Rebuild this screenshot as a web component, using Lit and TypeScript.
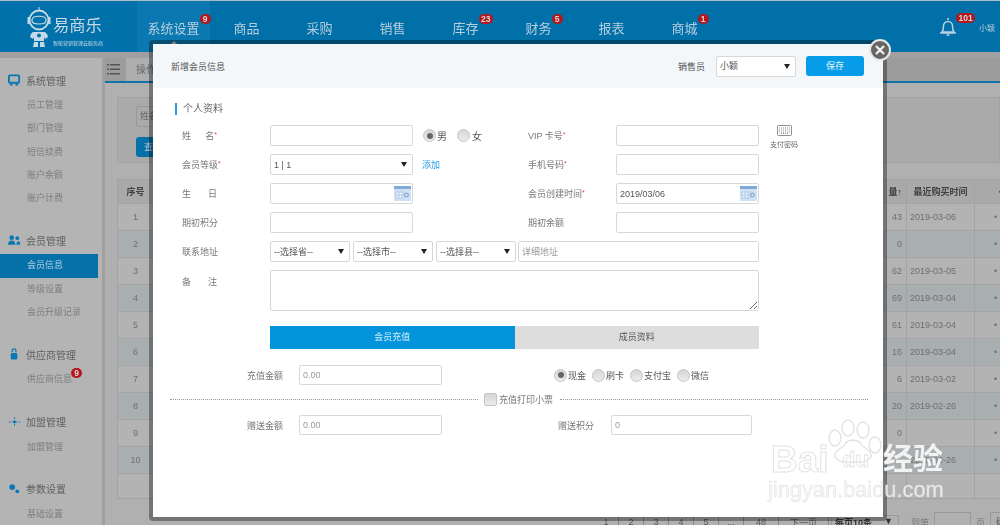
import { LitElement, html, css, svg } from "lit";
import { customElement } from "lit/decorators.js";

const calendar = svg`<svg width="17" height="15" viewBox="0 0 17 15"><rect width="17" height="15" fill="#cfe2f5"/><rect width="17" height="3" fill="#7fa9d6"/><path d="M2 6h8v6H2zM2 9h8M5 6v6M8 6v6" fill="#eef5fc" stroke="#9dbde0" stroke-width=".7"/><circle cx="12.5" cy="9" r="1.9" fill="none" stroke="#6f9ccc"/></svg>`;
const radio = (on: boolean) => html`<span class="radio ${on ? "on" : ""}"></span>`;
const sel = (t: string) => html`<div class="sl"><select><option>${t}</option></select></div>`;

@customElement("app-root")
export class AppRoot extends LitElement {
  static styles = css`
    :host { display: block; width: 1000px; height: 525px; overflow: hidden; position: relative; font-family: "Liberation Sans", "Noto Sans CJK SC", sans-serif; font-size: 9px; color: #666; background: #a0a0a0; }
    * { box-sizing: border-box; }
    .soft { filter: blur(.35px); width: 1000px; height: 525px; position: relative; overflow: hidden; }
    header { height: 52px; background: #016fa8; border-top: 1px solid #a9bdc9; display: flex; align-items: stretch; color: #b6cfdd; }
    .logo { width: 137px; background: #0171ab; display: flex; padding: 5px 0 0 26px; color: #c6d9e5; }
    .logo-text { margin-left: 1px; padding-top: 8px; }
    .logo-text b { display: block; font-size: 16.3px; font-weight: 400; line-height: 22px; white-space: nowrap; }
    .logo-text small { display: block; font-size: 5px; line-height: 8px; margin-top: 3px; white-space: nowrap; }
    nav { display: flex; }
    .nav { width: 73px; text-align: center; font-size: 13px; line-height: 54px; position: relative; }
    .nav.cur { background: #0b78b1; }
    .nav.cur::after { content: ""; position: absolute; left: 33px; top: 40px; border: 4px solid transparent; border-top: 0; border-bottom-color: #c4c4c4; }
    .nav-t { display: inline-block; position: relative; line-height: 16px; vertical-align: middle; }
    .badge { position: absolute; background: #b5161c; color: #d8d8d8; border-radius: 6px; font: bold 8.5px/10px "Liberation Sans", sans-serif; padding: 0 2.5px; min-width: 11px; height: 10px; text-align: center; }
    .nav .badge { top: -7px; left: 100%; }
    .user { margin-left: auto; display: flex; position: relative; width: 62px; padding: 16px 0 0 0; }
    .user span.name { position: absolute; right: 5px; top: 21px; font-size: 8px; }
    .user .badge { left: 18px; top: 12px; }
    .main { display: flex; margin-top: 6px; height: 467px; }
    aside { width: 102px; background: #b4b4b4; padding-top: 10px; flex: none; }
    .group { margin-bottom: 18px; }
    .group h4 { margin: 0 0 2px; height: 24px; display: flex; align-items: center; font-weight: 400; font-size: 10px; color: #5f5f5f; padding-left: 8px; gap: 5px; }
    .group h4 svg { width: 13px; height: 12px; flex: none; }
    .item { height: 23.3px; line-height: 23px; padding-left: 27px; color: #7d7d7d; position: relative; width: 98px; }
    .item.active { background: #0670a9; color: #b3cfde; }
    .item .badge { left: 71px; top: 0; }
    .content { margin-left: 3px; flex: 1; background: #b0b0b0; min-width: 0; }
    .tabs { height: 25px; background: #9c9c9c; border-bottom: 2px solid #1173a8; display: flex; padding-left: 2px; }
    .burger { width: 13px; margin: 6px 6px 0 0; }
    .tab { width: 60px; background: #aeaeae; line-height: 24px; font-size: 10px; padding-left: 10px; color: #666; }
    .panel { margin: 14px 0 0 12px; height: 66px; background: #aaa; border: 1px solid #a2a2a2; padding: 8px 18px; }
    .panel .f { width: 120px; height: 21px; border: 1px solid #999; border-radius: 2px; line-height: 19px; padding-left: 3px; }
    .panel .b { margin-top: 10px; width: 40px; height: 20px; border-radius: 3px; background: #0670a9; color: #bcd; line-height: 20px; padding-left: 8px; }
    .table { margin: 16px 0 0 12px; border: 1px solid #a3a3a3; width: 884px; }
    .tr { display: flex; height: 27px; background: #b3b3b3; border-bottom: 1px solid #a4a4a4; align-items: center; color: #6f6f6f; }
    .tr:nth-child(odd) { background: #a9aeb0; }
    .tr.head { height: 24px; background: #a9a9a9; font-weight: 700; color: #404040; }
    .tr.foot { height: 24px; background: #b3b3b3; border-bottom: 0; }
    .c { height: 100%; display: flex; align-items: center; border-right: 1px solid #a3a3a3; flex: none; }
    .seq { width: 36px; justify-content: center; }
    .mid { flex: 1; }
    .num { width: 20px; justify-content: flex-end; padding-right: 4px; }
    .date { width: 68px; padding-left: 3px; }
    .act { width: 25px; padding-left: 19px; border: 0; }
    .tr.head .date { justify-content: center; padding: 0; }
    .pager { display: flex; height: 20px; margin-top: 13px; padding-left: 489px; align-items: center; color: #555; }
    .pager span { width: 25px; text-align: center; flex: none; border-right: 1px solid #888; }
    .pager .w35 { width: 35px; } .pager .w50 { width: 50px; }
    .pager .sel { width: 68px; margin-left: 2px; border: 1px solid #999; font-weight: 700; display: flex; justify-content: space-between; padding: 0 5px 0 3px; color: #333; }
    .pager .t { border: 0; color: #777; width: auto; margin-left: 12px; }
    .pager .t.n { margin-left: 5px; }
    .pager .in { width: 37px; height: 20px; border: 1px solid #999; margin-left: 5px; }
    .pager .box { width: 30px; height: 20px; margin-left: 5px; border: 1px solid #999; line-height: 18px; }
    .modal { position: absolute; left: 149px; top: 40px; width: 738px; height: 481px; border: 4px solid rgba(0,0,0,.34); border-radius: 4px; background: #fff padding-box; color: #777; }
    .mhead { height: 44px; background: #f4f7fa; display: flex; align-items: center; padding: 0 19px 0 18px; color: #555; }
    .mhead .sp { flex: 1; }
    .mhead .sl { width: 80px; margin: 0 10px 0 11px; }
    .save { width: 58px; height: 20px; border-radius: 3px; background: #069ce8; color: #e6f5fd; text-align: center; line-height: 20px; }
    .close { position: absolute; right: -8px; top: -5px; width: 22px; height: 22px; border-radius: 50%; background: #666; border: 2px solid #e8e8e8; display: flex; align-items: center; justify-content: center; }
    .body { padding: 15px 0 0 29px; position: relative; }
    .sec { height: 12px; margin-left: -7px; border-left: 2px solid #2aa0e0; padding-left: 6px; line-height: 12px; font-size: 10px; color: #666; }
    .grid { margin-top: 10px; display: grid; grid-template-columns: 88px 143px 115px 88px 143px auto; grid-auto-rows: 21px; row-gap: 8px; width: 620px; align-items: center; }
    .lab { white-space: nowrap; }
    .lab.sp2 { display: flex; width: 35px; justify-content: space-between; }
    .lab i { color: #e5484d; font-style: normal; font-size: 7px; vertical-align: 2px; }
    input, select, textarea { font: 9px "Liberation Sans", "Noto Sans CJK SC", sans-serif; color: #555; border: 1px solid #d8d8d8; border-radius: 2px; background: #fff; height: 21px; padding: 0 3px; width: 100%; outline: none; margin: 0; display: block; }
    select { appearance: none; -webkit-appearance: none; }
    input::placeholder { color: #999; }
    .sl { position: relative; }
    .sl::after { content: ""; position: absolute; right: 6px; top: 8px; border: 3px solid transparent; border-bottom: 0; border-top: 5px solid #222; pointer-events: none; }
    .gray { color: #999; }
    .wrap { position: relative; }
    .wrap svg { position: absolute; right: 2px; top: 3px; }
    .rg { display: flex; align-items: center; margin-left: 10px; color: #555; }
    .rg .m { margin: 0 10px 0 1px; font-size: 10px; }
    .rg .f { margin-left: 2px; font-size: 10px; }
    .radio { width: 13px; height: 13px; border-radius: 50%; border: 1px solid #c4c4c4; background: linear-gradient(#d6d6d6, #ececec); flex: none; display: flex; align-items: center; justify-content: center; }
    .radio.on::after { content: ""; width: 6px; height: 6px; border-radius: 50%; background: #666; }
    .add { margin-left: 9px; color: #2a9fe0; }
    .kb { display: flex; flex-direction: column; align-items: center; width: 30px; margin-left: 10px; font-size: 7px; white-space: nowrap; color: #666; height: 21px; margin-top: -1px; line-height: 9px; }
    .kb svg { margin-bottom: 4px; flex: none; }
    .addr { grid-column: 2 / span 4; display: flex; }
    .addr .sl { width: 80px; margin-right: 3px; flex: none; }
    .addr input { flex: 1; margin-left: -1px; }
    .ta { grid-column: 2 / span 4; height: 41px; align-self: start; }
    .ta textarea { height: 41px; }
    .rem { align-self: start; padding-top: 5px; }
    .mtabs { display: flex; margin: 35px 0 0 88px; width: 489px; height: 23px; line-height: 23px; text-align: center; }
    .mtabs div { flex: 1; background: #ddd; color: #555; }
    .mtabs div.on { background: #0494dc; color: #d8effb; }
    .row { display: flex; align-items: center; height: 20px; }
    .row.first { margin-top: 16px; }
    .row .l { width: 101px; text-align: right; margin-right: 16px; flex: none; }
    .row input { width: 143px; height: 20px; flex: none; }
    .pay { margin-left: 112px; display: flex; align-items: center; color: #555; }
    .pay span.x { margin: 0 6px 0 1px; }
    .div { display: flex; align-items: center; margin: 4px 0 6px -12px; height: 20px; width: 698px; }
    .dots { height: 0; border-top: 1px dotted #999; flex: 1; }
    .check { width: 13px; height: 13px; border-radius: 2px; border: 1px solid #c4c4c4; background: linear-gradient(#d6d6d6, #ececec); margin: 0 2px 0 6px; flex: none; }
    .div .txt { margin-right: 7px; }
    .row2 { margin-left: 116px; width: 53px; flex: none; }
    .row .in2 { width: 141px; }
    .mark { position: absolute; left: 760px; top: 410px; width: 200px; height: 100px; pointer-events: none; }
    .paw { position: absolute; left: 60px; top: 5px; }
    .bai { position: absolute; left: 11px; top: 29px; font: 700 37px/42px "Liberation Sans", sans-serif; color: transparent; -webkit-text-stroke: 1px #e2e2e2; }
    .du { position: absolute; left: 82px; top: 37px; font: 700 22px/26px "Liberation Sans", sans-serif; color: transparent; -webkit-text-stroke: .8px #e2e2e2; }
    .jy { position: absolute; left: 123px; top: 31px; font-size: 30px; line-height: 36px; font-weight: 700; color: #f2f2f2; white-space: nowrap; }
    .url { position: absolute; left: 8px; top: 67px; font: 400 21.8px/26px "Liberation Sans", sans-serif; color: rgba(242,242,242,.85); -webkit-text-stroke: .4px #dedede; white-space: nowrap; }
  `;

  render() {
    const navs = [["系统设置", "9"], ["商品", ""], ["采购", ""], ["销售", ""], ["库存", "23"], ["财务", "5"], ["报表", ""], ["商城", "1"]];
    const groups = [
      { t: "系统管理", ic: svg`<rect x="1" y="1" width="11" height="8" rx="1" fill="none" stroke="#0a78b4" stroke-width="2"/><path d="M2 11h3M8 11h3" stroke="#0a78b4" stroke-width="2"/>`, items: ["员工管理", "部门管理", "短信续费", "账户余额", "账户计费"] },
      { t: "会员管理", ic: svg`<circle cx="4" cy="3.5" r="2.5" fill="#0a78b4"/><circle cx="10" cy="4" r="2" fill="#0a78b4"/><path d="M0 11c0-6 8-6 8 0zM9 11c0-4 4-5 4-1v1z" fill="#0a78b4"/>`, items: ["会员信息", "等级设置", "会员升级记录"] },
      { t: "供应商管理", ic: svg`<path d="M4.500 4V2.500a2 2 0 014 0V4" fill="none" stroke="#0a78b4" stroke-width="1.400"/><rect x="3" y="5" width="7" height="7" rx="1.500" fill="#0a78b4"/>`, items: ["供应商信息"] },
      { t: "加盟管理", ic: svg`<circle cx="7" cy="6" r="1.600" fill="#0a78b4"/><path d="M1 6h12M7 1v10" stroke="#0a78b4" stroke-dasharray="2 1.500"/>`, items: ["加盟管理"] },
      { t: "参数设置", ic: svg`<circle cx="4.500" cy="4" r="3" fill="#0a78b4"/><circle cx="10" cy="8.500" r="2" fill="#0a78b4"/>`, items: ["基础设置"] },
    ];
    const rows = [["43", "2019-03-06"], ["0", ""], ["62", "2019-03-05"], ["69", "2019-03-04"], ["61", "2019-03-04"], ["16", "2019-03-04"], ["6", "2019-03-02"], ["20", "2019-02-26"], ["0", ""], ["", "2019-02-26"]];
    return html`<div class="soft">
      <header>
        <div class="logo">
          <svg width="26" height="42" viewBox="0 0 26 42" fill="none" stroke="#c6d9e6">
            <path d="M13 1v3" stroke-width="1"/>
            <circle cx="13" cy="14" r="9.500" stroke-width="1.800"/>
            <path d="M6 14c0-5 14-5 14 0v1c0 4-14 4-14 0z" stroke-width="1.200"/>
            <path d="M2.500 11v7M23.500 11v7" stroke-width="2"/>
            <path d="M8 26h10c2 0 3.500 2 4 5l-3 2-1-2v4H8v-4l-1 2-3-2c.5-3 2-5 4-5zM8 36h4v5H7zM14 36h4l1 5h-5z" fill="#c6d9e6" stroke="none"/>
            <circle cx="13" cy="29.500" r="2" fill="#0171ab" stroke="none"/>
          </svg>
          <div class="logo-text"><b>易商乐</b><small>智能营销管理云服务商</small></div>
        </div>
        <nav>${navs.map(([n, b], i) => html`<div class="nav ${i === 0 ? "cur" : ""}"><span class="nav-t">${n}${b ? html`<span class="badge">${b}</span>` : ""}</span></div>`)}</nav>
        <div class="user">
          <svg width="20" height="20" viewBox="0 0 20 20" fill="none" stroke="#b9d2e0" stroke-width="1.500"><path d="M4 15c1.500-2 1.500-3 1.500-6a4.500 4.500 0 019 0c0 3 0 4 1.500 6zM2 16h16M10 1v2M8.500 18h3"/></svg>
          <span class="badge">101</span>
          <span class="name">小颖</span>
        </div>
      </header>
      <div class="main">
        <aside>
          ${groups.map((g) => html`<div class="group"><h4><svg viewBox="0 0 14 12">${g.ic}</svg>${g.t}</h4>
            ${g.items.map((it) => html`<div class="item ${it === "会员信息" ? "active" : ""}">${it}${it === "供应商信息" ? html`<span class="badge">9</span>` : ""}</div>`)}
          </div>`)}
        </aside>
        <div class="content">
          <div class="tabs">
            <svg class="burger" width="13" height="11" viewBox="0 0 13 11" fill="#555"><path d="M0 0h2v1.500H0zM3 0h10v1.500H3zM0 4.500h2V6H0zM3 4.500h10V6H3zM0 9h2v1.500H0zM3 9h10v1.500H3z"/></svg>
            <div class="tab">操作</div>
          </div>
          <div class="panel"><div class="f">姓名</div><div class="b">查询</div></div>
          <div class="table">
            <div class="tr head"><div class="c seq">序号</div><div class="c mid"></div><div class="c num">量↑</div><div class="c date">最近购买时间</div><div class="c act">〈</div></div>
            ${rows.map((r, i) => html`<div class="tr"><div class="c seq">${i + 1}</div><div class="c mid"></div><div class="c num">${r[0]}</div><div class="c date">${r[1]}</div><div class="c act">•</div></div>`)}
            <div class="tr foot"><div class="c seq"></div><div class="c mid"></div><div class="c num"></div><div class="c date"></div><div class="c act"></div></div>
          </div>
          <div class="pager">
            ${["1", "2", "3", "4", "5", "..."].map((p) => html`<span>${p}</span>`)}<span class="w35">48</span><span class="w50">下一页</span><span class="sel">每页10条<b>▼</b></span>
            <span class="t">到第</span><span class="in"></span><span class="t n">页</span><span class="box">确定</span>
          </div>
        </div>
      </div>

      <div class="modal">
        <div class="close"><svg width="10" height="10" viewBox="0 0 10 10" stroke="#f2f2f2" stroke-width="2.200"><path d="M1 1l8 8M9 1l-8 8"/></svg></div>
        <div class="mhead"><span>新增会员信息</span><span class="sp"></span><span>销售员</span>${sel("小颖")}<div class="save">保存</div></div>
        <div class="body">
          <div class="sec">个人资料</div>
          <div class="grid">
            <div class="lab sp2"><span>姓</span><span>名<i>*</i></span></div><input />
            <div class="rg">${radio(true)}<span class="m">男</span>${radio(false)}<span class="f">女</span></div>
            <div class="lab">VIP 卡号<i>*</i></div><input />
            <div class="kb"><svg width="15" height="11" viewBox="0 0 15 11" fill="none" stroke="#777" stroke-width=".8"><rect x=".5" y=".5" width="14" height="10" rx="1"/><path d="M2 3h11M2 5h11M2 7h11M4 8.500h7" stroke-dasharray="1 1"/></svg>支付密码</div>

            <div class="lab">会员等级<i>*</i></div>${sel("1 | 1")}
            <div class="add">添加</div>
            <div class="lab">手机号码<i>*</i></div><input /><div></div>

            <div class="lab sp2"><span>生</span><span>日</span></div><div class="wrap"><input />${calendar}</div><div></div>
            <div class="lab">会员创建时间<i>*</i></div><div class="wrap"><input value="2019/03/06" />${calendar}</div><div></div>

            <div class="lab">期初积分</div><input /><div></div>
            <div class="lab">期初余额</div><input /><div></div>

            <div class="lab">联系地址</div>
            <div class="addr">${sel("--选择省--")}${sel("--选择市--")}${sel("--选择县--")}<input placeholder="详细地址" /></div>
            <div></div>

            <div class="lab sp2 rem"><span>备</span><span>注</span></div>
            <div class="ta"><textarea></textarea></div>
            <div></div>
          </div>
          <div class="mtabs"><div class="on">会员充值</div><div>成员资料</div></div>
          <div class="row first">
            <div class="l">充值金额</div><input class="gray" value="0.00" />
            <div class="pay">${radio(true)}<span class="x">现金</span>${radio(false)}<span class="x">刷卡</span>${radio(false)}<span class="x">支付宝</span>${radio(false)}<span class="x">微信</span></div>
          </div>
          <div class="div"><div class="dots"></div><div class="check"></div><div class="txt">充值打印小票</div><div class="dots"></div></div>
          <div class="row">
            <div class="l">赠送金额</div><input class="gray" value="0.00" />
            <div class="row2">赠送积分</div><input class="gray in2" value="0" />
          </div>
        </div>
      </div>

      <div class="mark">
        <svg class="paw" width="70" height="62" viewBox="0 0 70 62" fill="none" stroke="#e2e2e2" stroke-width="1.300">
          <ellipse cx="15" cy="23" rx="6" ry="8"/><ellipse cx="28" cy="13" rx="6" ry="8"/><ellipse cx="43" cy="15" rx="6" ry="8"/><ellipse cx="55" cy="30" rx="6" ry="8"/>
          <path d="M18 45c-3-2-4-5-2-8 4-4 7-5 9-8 3-5 13-5 16 0 2 3 5 4 9 8 2 3 1 6-2 8-4 3-9 2-15 2s-11 1-15-2z"/>
        </svg>
        <div class="bai">Bai</div><div class="du">du</div><div class="jy">经验</div><div class="url">jingyan.baidu.com</div>
      </div>
    </div>`;
  }
}
